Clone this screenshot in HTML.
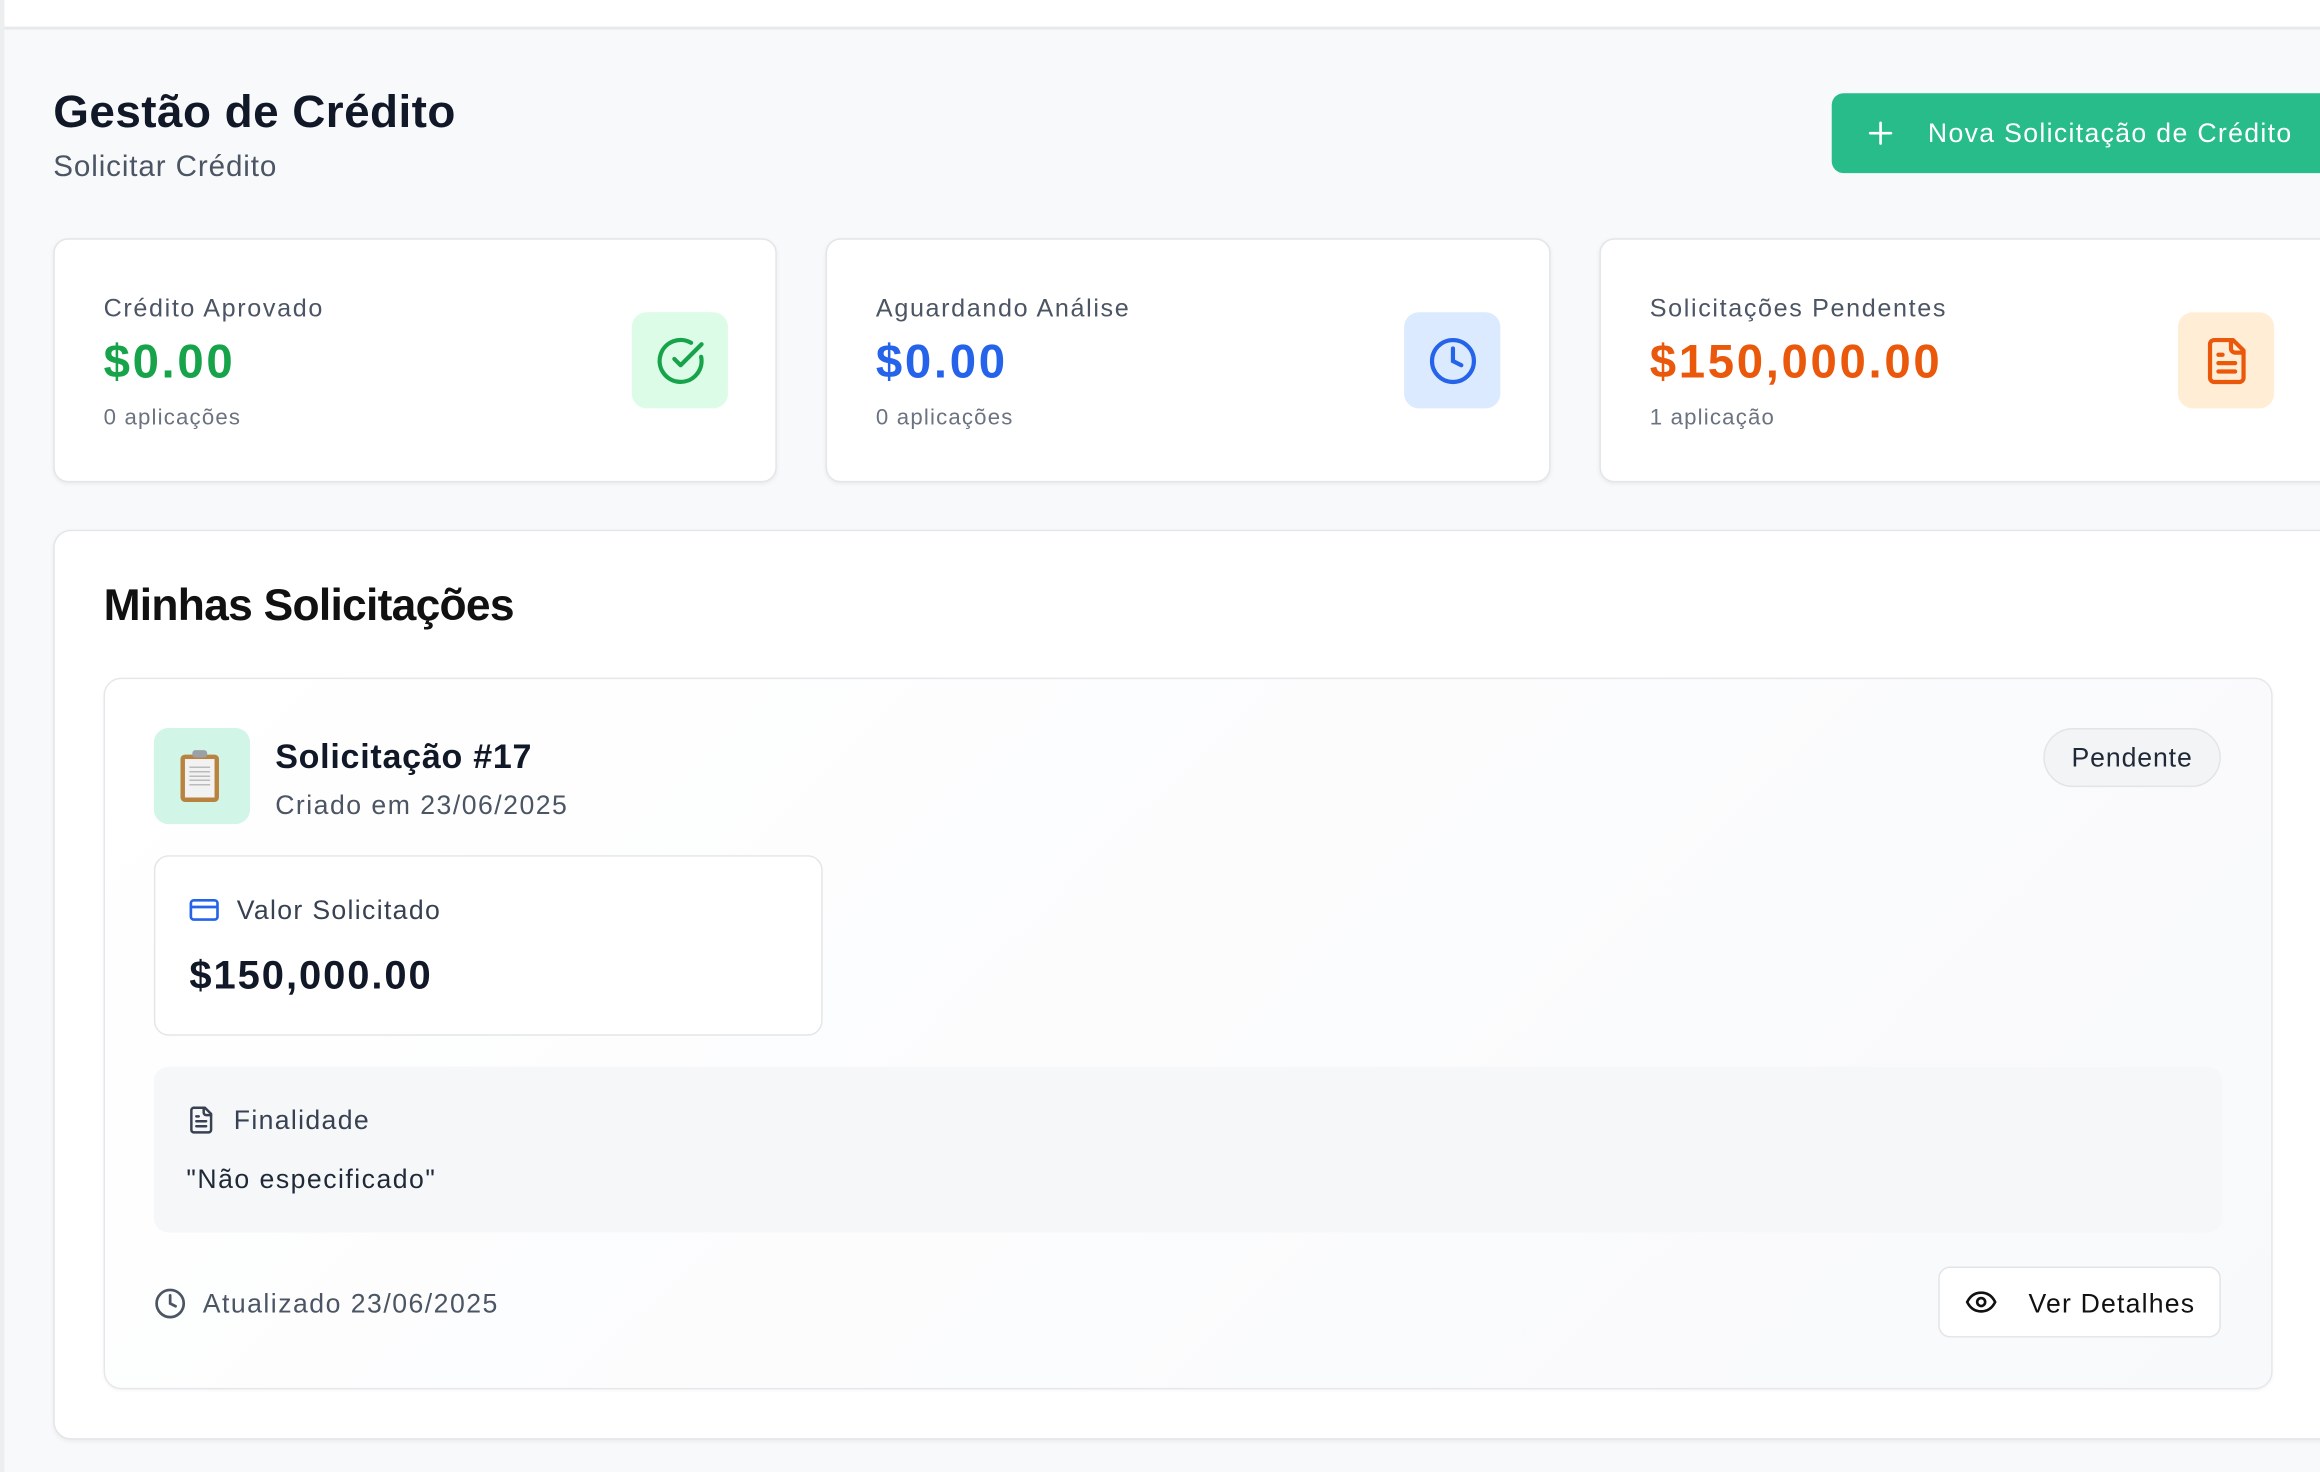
<!DOCTYPE html>
<html><head><meta charset="utf-8"><style>
html,body{margin:0;padding:0;width:2320px;height:1472px;overflow:hidden;background:#f8f9fb;}
#w{position:absolute;left:0;top:0;width:1568px;height:995px;transform:scale(1.47959);transform-origin:0 0;font-family:"Liberation Sans",sans-serif;background:#f8f9fb;overflow:hidden;}
.a{position:absolute;white-space:nowrap;}
.card{position:absolute;background:#fff;border:1px solid #e3e5e8;border-radius:10px;box-shadow:0 1px 3px rgba(0,0,0,.06);}
.lbl{font-size:17px;color:#4b5563;letter-spacing:1.1px;}
.val{font-size:32px;font-weight:bold;letter-spacing:1.8px;}
.sub{font-size:15px;color:#6b7280;letter-spacing:0.8px;}
.ib{position:absolute;width:65px;height:65px;border-radius:10px;top:49px;left:390px;display:flex;align-items:center;justify-content:center;}
</style></head><body><div id="w">
<div class="a" style="left:0;top:0;width:1568px;height:18px;background:#fff;border-bottom:2px solid #e8e9eb;"></div>
<div class="a" style="left:0;top:0;width:3px;height:995px;background:#eceef0;"></div>

<div class="a" style="left:36px;top:58px;font-size:31px;font-weight:bold;color:#111827;letter-spacing:0.3px;">Gestão de Crédito</div>
<div class="a" style="left:36px;top:102px;font-size:20px;color:#4b5563;letter-spacing:0.6px;">Solicitar Crédito</div>

<div class="a" style="left:1238px;top:63px;width:340px;height:54px;background:#27bc8a;border-radius:8px;">
<svg class="a" style="left:24px;top:18px" width="18" height="18" viewBox="0 0 18 18"><path d="M9 2v14M2 9h14" stroke="#fff" stroke-width="1.8" stroke-linecap="round"/></svg>
<div class="a" style="left:65px;top:17px;font-size:18px;color:#fff;letter-spacing:0.9px;">Nova Solicitação de Crédito</div></div>

<div class="card" style="left:36px;top:161px;width:487px;height:163px;">
<div class="a lbl" style="left:33px;top:37px">Crédito Aprovado</div>
<div class="a val" style="left:33px;top:64px;color:#16a34a">$0.00</div>
<div class="a sub" style="left:33px;top:112px">0 aplicações</div>
<div class="ib" style="background:#dcfce7"><svg width="34" height="34" viewBox="0 0 24 24" fill="none" stroke="#16a34a" stroke-width="2" stroke-linecap="round" stroke-linejoin="round"><path d="M21.8 10A10 10 0 1 1 17 3.3"/><path d="m9 11 3 3L22 4"/></svg></div>
</div>
<div class="card" style="left:558px;top:161px;width:488px;height:163px;">
<div class="a lbl" style="left:33px;top:37px">Aguardando Análise</div>
<div class="a val" style="left:33px;top:64px;color:#2563eb">$0.00</div>
<div class="a sub" style="left:33px;top:112px">0 aplicações</div>
<div class="ib" style="background:#dbeafe"><svg width="34" height="34" viewBox="0 0 24 24" fill="none" stroke="#2563eb" stroke-width="2" stroke-linecap="round"><circle cx="12" cy="12" r="10"/><path d="M12 6v6l4 2"/></svg></div>
</div>
<div class="card" style="left:1081px;top:161px;width:500px;height:163px;">
<div class="a lbl" style="left:33px;top:37px">Solicitações Pendentes</div>
<div class="a val" style="left:33px;top:64px;color:#ea580c">$150,000.00</div>
<div class="a sub" style="left:33px;top:112px">1 aplicação</div>
<div class="ib" style="background:#ffedd5"><svg width="34" height="34" viewBox="0 0 24 24" fill="none" stroke="#ea580c" stroke-width="2" stroke-linecap="round" stroke-linejoin="round"><path d="M15 2H6a2 2 0 0 0-2 2v16a2 2 0 0 0 2 2h12a2 2 0 0 0 2-2V7z"/><path d="M14 2v4a2 2 0 0 0 2 2h4M10 9H8M16 13H8M16 17H8"/></svg></div>
</div>

<div class="card" style="left:36px;top:358px;width:1560px;height:613px;border-radius:12px;">
<div class="a" style="left:33px;top:34px;font-size:30px;font-weight:bold;color:#111;letter-spacing:-0.5px;">Minhas Solicitações</div>
</div>

<div class="a" style="left:70px;top:458px;width:1464px;height:479px;border:1px solid #e5e7eb;border-radius:12px;background:linear-gradient(135deg,#ffffff,#f8f9fb);box-shadow:0 1px 2px rgba(0,0,0,.04);">
<div class="a" style="left:33px;top:33px;width:65px;height:65px;border-radius:10px;background:#d1f5e7;">
 <div class="a" style="left:18px;top:18px;width:26px;height:32px;background:#b9823f;border-radius:3px;"></div>
 <div class="a" style="left:21px;top:21px;width:20px;height:26px;background:#f2f2f2;"></div>
 <div class="a" style="left:24px;top:26px;width:14px;height:14px;background:repeating-linear-gradient(#bbb 0 1px,transparent 1px 3px);"></div>
 <div class="a" style="left:26px;top:15px;width:10px;height:5px;background:#9aa0a6;border-radius:2px;"></div>
</div>
<div class="a" style="left:115px;top:39px;font-size:23px;font-weight:bold;color:#111827;letter-spacing:0.5px;">Solicitação #17</div>
<div class="a" style="left:115px;top:75px;font-size:18px;color:#4b5563;letter-spacing:1px;">Criado em 23/06/2025</div>
<div class="a" style="left:1310px;top:33px;width:118px;height:38px;border:1px solid #e2e4e7;border-radius:20px;background:#f3f4f6;font-size:18px;color:#1f2937;text-align:center;line-height:39px;letter-spacing:0.6px;">Pendente</div>

<div class="a" style="left:33px;top:119px;width:450px;height:120px;background:#fff;border:1px solid #e3e5e8;border-radius:10px;">
<svg class="a" style="left:23px;top:28px" width="20" height="16" viewBox="0 0 20 16" fill="none" stroke="#2563eb" stroke-width="1.8"><rect x="1" y="1.5" width="18" height="13" rx="2"/><path d="M1 6h18"/></svg>
<div class="a" style="left:55px;top:26px;font-size:18px;color:#374151;letter-spacing:0.9px;">Valor Solicitado</div>
<div class="a" style="left:23px;top:65px;font-size:27px;font-weight:bold;color:#111827;letter-spacing:1.3px;">$150,000.00</div>
</div>

<div class="a" style="left:33px;top:262px;width:1398px;height:112px;background:#f6f7f9;border-radius:10px;">
<svg class="a" style="left:22px;top:25px" width="20" height="22" viewBox="0 0 24 24" fill="none" stroke="#374151" stroke-width="2" stroke-linecap="round" stroke-linejoin="round"><path d="M15 2H6a2 2 0 0 0-2 2v16a2 2 0 0 0 2 2h12a2 2 0 0 0 2-2V7z"/><path d="M14 2v4a2 2 0 0 0 2 2h4M10 9H8M16 13H8M16 17H8"/></svg>
<div class="a" style="left:54px;top:26px;font-size:18px;color:#374151;letter-spacing:0.9px;">Finalidade</div>
<div class="a" style="left:22px;top:66px;font-size:18px;color:#1f2937;letter-spacing:1px;">"Não especificado"</div>
</div>

<svg class="a" style="left:33px;top:411px" width="22" height="22" viewBox="0 0 24 24" fill="none" stroke="#4b5563" stroke-width="2" stroke-linecap="round"><circle cx="12" cy="12" r="10"/><path d="M12 6v6l4 2"/></svg>
<div class="a" style="left:66px;top:412px;font-size:18px;color:#4b5563;letter-spacing:1px;">Atualizado 23/06/2025</div>
<div class="a" style="left:1239px;top:397px;width:189px;height:46px;background:#fff;border:1px solid #e2e4e7;border-radius:8px;">
<svg class="a" style="left:17px;top:14px" width="22" height="18" viewBox="0 0 24 20" fill="none" stroke="#111" stroke-width="2"><path d="M1.5 10C4 5 7.5 3 12 3s8 2 10.5 7c-2.5 5-6 7-10.5 7S4 15 1.5 10z"/><circle cx="12" cy="10" r="3"/></svg>
<div class="a" style="left:60px;top:14px;font-size:18px;color:#111;letter-spacing:0.8px;">Ver Detalhes</div>
</div>
</div>
</div></body></html>
